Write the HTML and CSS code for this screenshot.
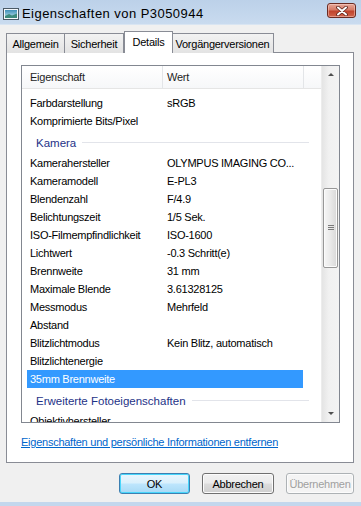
FILE: index.html
```html
<!DOCTYPE html>
<html lang="de">
<head>
    <meta charset="UTF-8">
    <meta name="viewport" content="width=device-width, initial-scale=1.0">
    <title>Eigenschaften von P3050944</title>
    <link rel="stylesheet" href="styles.css">
</head>
<body>
    <div class="window">
        <div class="titlebar">
            <svg class="app-icon" width="16" height="12" viewBox="0 0 16 12">
                <defs>
                    <linearGradient id="sky" x1="0" y1="0" x2="0" y2="1">
                        <stop offset="0" stop-color="#3f8fb8"/>
                        <stop offset="1" stop-color="#bfe3ee"/>
                    </linearGradient>
                </defs>
                <rect x="0.5" y="0.5" width="15" height="11" fill="#f4f8fb" stroke="#4b5a66"/>
                <rect x="2" y="2" width="12" height="8" fill="url(#sky)"/>
                <path d="M2 8 L6 6 L9 7.5 L14 5.5 L14 10 L2 10 Z" fill="#3c8a7c"/>
            </svg>
            <span class="title">Eigenschaften von P3050944</span>
            <button class="close-btn">
                <svg width="14" height="10" viewBox="0 0 14 10">
                    <path d="M3 1.5 L11 8.5 M11 1.5 L3 8.5" stroke="#5b2219" stroke-width="3.6" stroke-linecap="round"/>
                    <path d="M3 1.5 L11 8.5 M11 1.5 L3 8.5" stroke="#ffffff" stroke-width="2" stroke-linecap="round"/>
                </svg>
            </button>
        </div>

        <div class="dialog">
            <div class="tabs">
                <div class="tab tab-general">Allgemein</div>
                <div class="tab tab-security">Sicherheit</div>
                <div class="tab tab-details active">Details</div>
                <div class="tab tab-versions">Vorgängerversionen</div>
            </div>

            <div class="panel">
                <div class="list">
                    <div class="list-main">
                        <div class="list-head">
                            <div class="head-col head-name">Eigenschaft</div>
                            <div class="head-col head-value">Wert</div>
                            <div class="head-col head-rest"></div>
                        </div>
                        <div class="rows">
                            <div class="row"><span>Farbdarstellung</span><span>sRGB</span></div>
                            <div class="row"><span>Komprimierte Bits/Pixel</span><span></span></div>
                            <div class="group"><span>Kamera</span><i></i></div>
                            <div class="row"><span>Kamerahersteller</span><span>OLYMPUS IMAGING CO...</span></div>
                            <div class="row"><span>Kameramodell</span><span>E-PL3</span></div>
                            <div class="row"><span>Blendenzahl</span><span>F/4.9</span></div>
                            <div class="row"><span>Belichtungszeit</span><span>1/5 Sek.</span></div>
                            <div class="row"><span>ISO-Filmempfindlichkeit</span><span>ISO-1600</span></div>
                            <div class="row"><span>Lichtwert</span><span>-0.3 Schritt(e)</span></div>
                            <div class="row"><span>Brennweite</span><span>31 mm</span></div>
                            <div class="row"><span>Maximale Blende</span><span>3.61328125</span></div>
                            <div class="row"><span>Messmodus</span><span>Mehrfeld</span></div>
                            <div class="row"><span>Abstand</span><span></span></div>
                            <div class="row"><span>Blitzlichtmodus</span><span>Kein Blitz, automatisch</span></div>
                            <div class="row"><span>Blitzlichtenergie</span><span></span></div>
                            <div class="row selected"><span>35mm Brennweite</span><span></span></div>
                            <div class="group"><span>Erweiterte Fotoeigenschaften</span><i></i></div>
                            <div class="row"><span>Objektivhersteller</span><span></span></div>
                        </div>
                    </div>
                    <div class="scrollbar">
                        <div class="arrow-box"><div class="arrow up"></div></div>
                        <div class="track">
                            <div class="thumb">
                                <div class="grip"></div>
                            </div>
                        </div>
                        <div class="arrow-box"><div class="arrow down"></div></div>
                    </div>
                </div>
                <a class="remove-link" href="#">Eigenschaften und persönliche Informationen entfernen</a>
            </div>

            <div class="buttons">
                <button class="btn btn-ok">OK</button>
                <button class="btn btn-cancel">Abbrechen</button>
                <button class="btn btn-apply" disabled>Übernehmen</button>
            </div>
        </div>
        <div class="frame-bottom"></div>
    </div>
</body>
</html>
```

FILE: styles.css
```css
*{
    margin: 0;
    padding: 0;
    box-sizing: border-box;
}
body{
    width: 361px;
    height: 506px;
    overflow: hidden;
    background-color: #f0f0f0;
    font-family: "Liberation Sans", Arial, sans-serif;
    font-size: 11px;
    letter-spacing: -0.25px;
    color: #000;
}
.window{
    display: flex;
    flex-direction: column;
    height: 506px;
}

/* title bar */
.titlebar{
    height: 25px;
    display: flex;
    align-items: center;
    background: linear-gradient(#bcd1e9, #c9dbef);
    border-bottom: 1px solid #d9e5f2;
}
.app-icon{
    margin-left: 3px;
    margin-top: 3px;
}
.title{
    margin-left: 3px;
    margin-top: 2px;
    font-size: 13px;
    letter-spacing: 0.45px;
    color: #000;
}
.close-btn{
    margin-left: auto;
    margin-right: 5px;
    margin-top: -3px;
    width: 29px;
    height: 15px;
    display: flex;
    justify-content: center;
    align-items: center;
    border: 1px solid #6b2b22;
    border-radius: 3px;
    background: linear-gradient(#e6a89a 0%, #d57a66 45%, #c0432c 55%, #d0654c 100%);
    box-shadow: inset 0 0 0 1px rgba(255, 220, 210, 0.45);
}

/* dialog */
.dialog{
    flex: 1;
    display: flex;
    flex-direction: column;
    padding: 6px 7px 0 6px;
}
.tabs{
    display: flex;
    height: 22px;
    margin-bottom: -1px;
    position: relative;
    z-index: 1;
}
.tab{
    height: 20px;
    margin-top: 2px;
    display: flex;
    justify-content: center;
    align-items: center;
    border: 1px solid #898c95;
    border-bottom: none;
    background: linear-gradient(#f2f2f2, #e3e3e3);
    margin-right: -1px;
}
.tab-general{ width: 59px; }
.tab-security{ width: 60px; }
.tab-details{ width: 49px; }
.tab-versions{ width: 103px; }
.tab.active{
    height: 22px;
    margin-top: 0;
    margin-left: 1px;
    margin-right: -2px;
    padding-bottom: 2px;
    background: #fff;
    position: relative;
    z-index: 2;
}
.panel{
    height: 411px;
    background: #fff;
    border: 1px solid #898c95;
    padding: 12px 0 0 14px;
    display: flex;
    flex-direction: column;
}

/* property list */
.list{
    width: 319px;
    height: 358px;
    border: 1px solid #828790;
    display: flex;
}
.list-main{
    flex: 1;
    overflow: hidden;
}
.list-head{
    display: flex;
    height: 23px;
    border-bottom: 1px solid #e5e5e5;
    background: linear-gradient(#ffffff, #f6f7f9);
}
.head-col{
    display: flex;
    align-items: center;
    color: #1e1e1e;
    border-right: 1px solid #e3e5e8;
}
.head-name{
    width: 141px;
    padding-left: 8px;
}
.head-value{
    width: 141px;
    padding-left: 4px;
}
.head-rest{
    flex: 1;
    border-right: none;
}
.rows{
    padding-top: 5px;
}
.row{
    width: 276px;
    height: 18px;
    margin-left: 5px;
    display: grid;
    grid-template-columns: 137px 1fr;
    align-items: center;
}
.row span{
    padding-left: 3px;
    white-space: nowrap;
}
.row.selected{
    background-color: #3399ff;
    color: #fff;
}
.group{
    width: 282px;
    height: 24px;
    margin-left: 5px;
    padding-left: 9px;
    padding-top: 1px;
    display: flex;
    align-items: center;
    gap: 6px;
    color: #1e3287;
    font-size: 11.5px;
    letter-spacing: 0;
}
.group i{
    flex: 1;
    height: 1px;
    background-color: #e2e4ea;
}

/* scrollbar */
.scrollbar{
    width: 18px;
    display: flex;
    flex-direction: column;
    background: linear-gradient(to right, #e4e4e4, #f1f1f1 40%, #f3f3f3);
    border-left: 1px solid #ececec;
}
.arrow-box{
    height: 17px;
    display: flex;
    justify-content: center;
    align-items: center;
}
.arrow{
    width: 0;
    height: 0;
    border-left: 3.5px solid transparent;
    border-right: 3.5px solid transparent;
}
.arrow.up{
    border-bottom: 3px solid #505050;
}
.arrow.down{
    border-top: 3px solid #505050;
}
.track{
    flex: 1;
    padding: 105px 0 0 1px;
}
.thumb{
    width: 15px;
    height: 80px;
    border: 1px solid #979797;
    border-radius: 2px;
    background: linear-gradient(to right, #f6f6f6, #e9e9e9 50%, #d8d8d8);
    box-shadow: inset 0 0 0 1px #fbfbfb;
    display: flex;
    justify-content: center;
    align-items: center;
}
.grip{
    width: 6px;
    height: 6px;
    background: repeating-linear-gradient(#7a7a7a 0, #7a7a7a 1px, transparent 1px, transparent 2px);
}

.remove-link{
    margin-top: 12px;
    line-height: 15px;
    color: #0066cc;
    text-decoration: underline;
}

/* buttons */
.buttons{
    display: flex;
    justify-content: flex-end;
    gap: 12px;
    margin-top: 10px;
}
.btn{
    height: 21px;
    font-family: "Liberation Sans", Arial, sans-serif;
    font-size: 11px;
    letter-spacing: -0.25px;
    border: 1px solid #707070;
    border-radius: 3px;
    background: linear-gradient(#f2f2f2 0%, #ebebeb 49%, #dddddd 51%, #cfcfcf 100%);
    box-shadow: inset 0 0 0 1px #fcfcfc;
    color: #000;
}
.btn-ok{
    width: 71px;
    border-color: #3c7fb1;
    background: linear-gradient(#eaf6fd 0%, #d9f0fc 49%, #bee6fd 51%, #a7d9f5 100%);
    box-shadow: inset 0 0 0 1px #48d6fb;
}
.btn-cancel{
    width: 72px;
}
.btn-apply{
    width: 68px;
    color: #a0a0a0;
    border-color: #adb2b5;
    background: #f4f4f4;
}

.frame-bottom{
    height: 4px;
    background-color: #c3d7ed;
}
```
